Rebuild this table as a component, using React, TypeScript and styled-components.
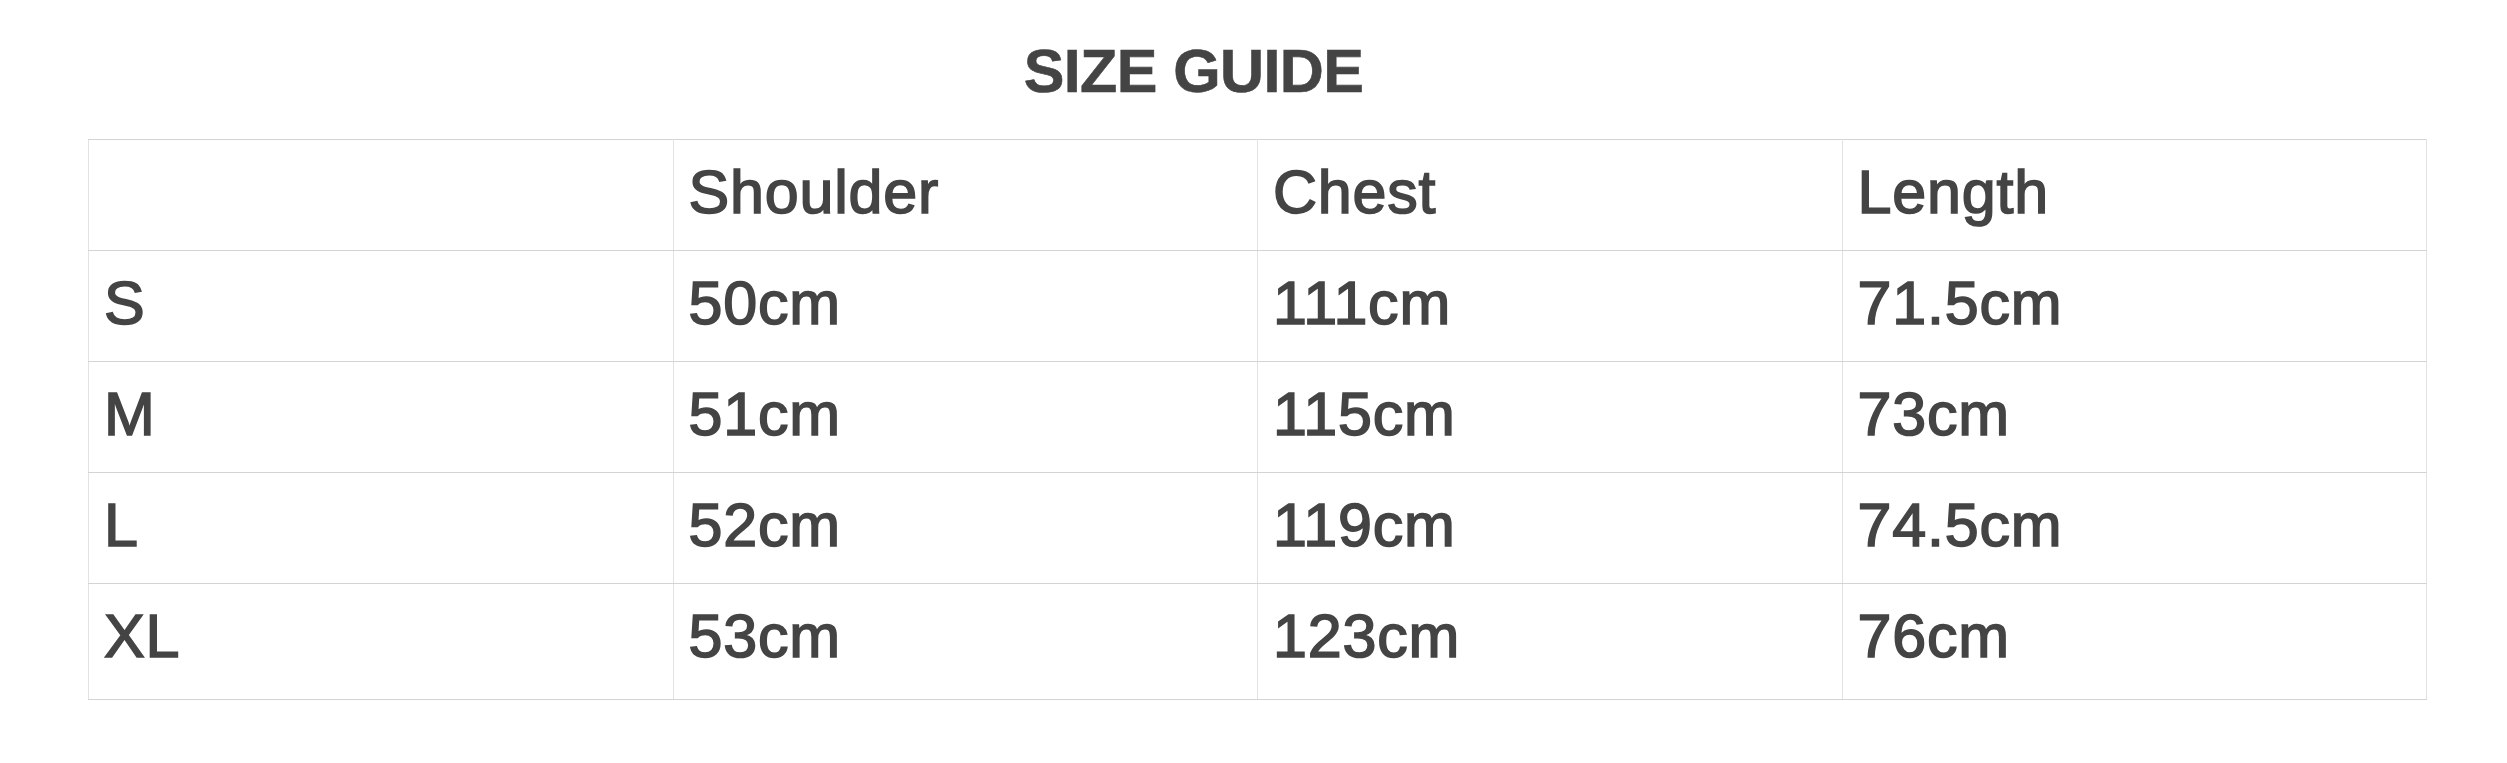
import React from "react";
import styled, { createGlobalStyle } from "styled-components";

const GlobalStyle = createGlobalStyle`
  html,
  body {
    background: #ffffff;
    margin: 0;
    padding: 0;
  }

  body {
    color: #444444;
    font-family: "Liberation Sans", Arial, sans-serif;
  }
`;

const Page = styled.div`
  box-sizing: border-box;
  padding: 36px 0 0 88px;
  width: 2507px;
`;

const Title = styled.h2`
  box-sizing: border-box;
  color: #444444;
  font-size: 61px;
  font-weight: 700;
  letter-spacing: -0.6px;
  line-height: 70px;
  margin: 0 0 33px;
  padding-right: 128px;
  text-align: center;
  -webkit-text-stroke: 0.6px #444444;
  width: 2339px;
`;

const Table = styled.table`
  border-collapse: collapse;
  table-layout: fixed;
  width: 2339px;
`;

const Row = styled.tr<{ $last?: boolean }>`
  td {
    padding-bottom: ${(p) => (p.$last ? "28px" : "23px")};
  }
`;

// medium weight like the original (Helvetica Neue Medium)
const Cell = styled.td`
  border-bottom: 1px solid #d4d4d4;
  border-left: 1px solid #e2e2e2;
  border-right: 1px solid #e2e2e2;
  border-top: 1px solid #d4d4d4;
  box-sizing: border-box;
  color: #444444;
  font-size: 61px;
  font-weight: 400;
  letter-spacing: 0.8px;
  line-height: 70px;
  padding: 17px 15px 23px;
  text-align: left;
  vertical-align: top;
  -webkit-text-stroke: 1.6px #444444;
  white-space: nowrap;
`;

const header = ["", "Shoulder", "Chest", "Length"];

const rows = [
  ["S", "50cm", "111cm", "71.5cm"],
  ["M", "51cm", "115cm", "73cm"],
  ["L", "52cm", "119cm", "74.5cm"],
  ["XL", "53cm", "123cm", "76cm"],
];

const App: React.FunctionComponent = () => (
  <>
    <GlobalStyle />
    <Page>
      <Title>SIZE GUIDE</Title>
      <Table>
        <tbody>
          <Row>
            {header.map((h, idx) => (
              // eslint-disable-next-line react/no-array-index-key
              <Cell key={`h-${idx}`}>{h}</Cell>
            ))}
          </Row>
          {rows.map((r, ri) => (
            <Row key={r[0]} $last={ri === rows.length - 1}>
              {r.map((v, ci) => (
                // eslint-disable-next-line react/no-array-index-key
                <Cell key={`${r[0]}-${ci}`}>{v}</Cell>
              ))}
            </Row>
          ))}
        </tbody>
      </Table>
    </Page>
  </>
);

export default App;
